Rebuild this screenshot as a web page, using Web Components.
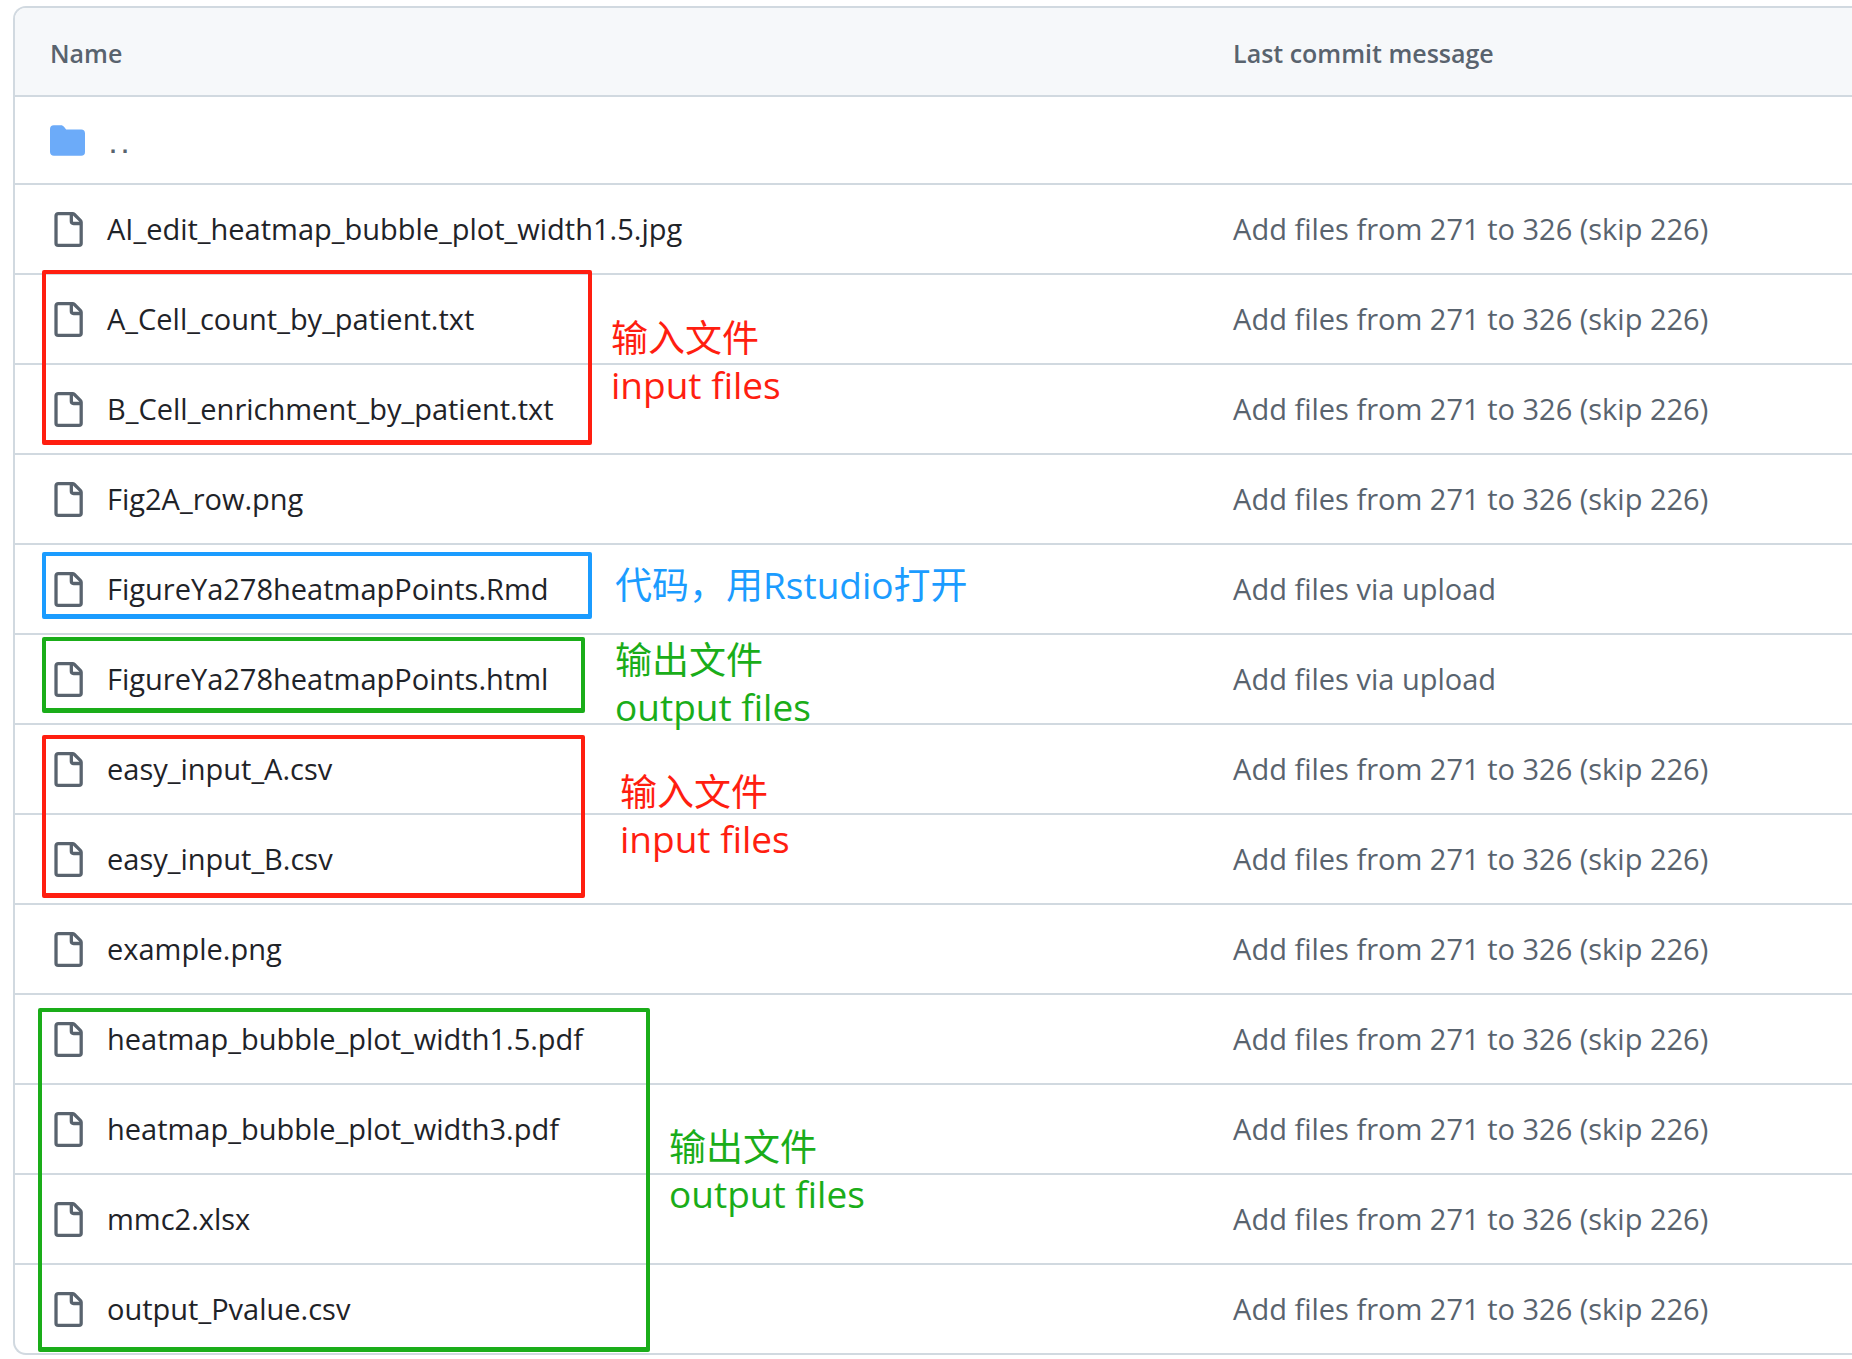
<!DOCTYPE html>
<html lang="zh-CN">
<head>
<meta charset="utf-8">
<meta name="viewport" content="width=device-width, initial-scale=1">
<title>FigureYa278heatmapPoints</title>
<style>
  body {
    margin: 0;
    background: #fff;
    color: #1f2328;
    font-family: "Open Sans", "Noto Sans CJK SC", sans-serif;
  }
</style>
</head>
<body>
<annotated-page>
  <file-table></file-table>

  <mark-box slot="marks" tone="red" style="left:42px;top:270px;width:550px;height:175px"></mark-box>
  <mark-box slot="marks" tone="blue" style="left:42px;top:552px;width:550px;height:67px"></mark-box>
  <mark-box slot="marks" tone="green" style="left:42px;top:637px;width:543px;height:76px"></mark-box>
  <mark-box slot="marks" tone="red" style="left:42px;top:735px;width:543px;height:163px"></mark-box>
  <mark-box slot="marks" tone="green" style="left:38px;top:1008px;width:612px;height:344px"></mark-box>

  <mark-note slot="marks" tone="red" style="left:611px;top:314px">输入文件<span slot="en">input files</span></mark-note>
  <mark-note slot="marks" tone="blue" style="left:615px;top:561px">代码，用Rstudio打开</mark-note>
  <mark-note slot="marks" tone="green" style="left:615px;top:636px">输出文件<span slot="en">output files</span></mark-note>
  <mark-note slot="marks" tone="red" style="left:620px;top:768px">输入文件<span slot="en">input files</span></mark-note>
  <mark-note slot="marks" tone="green" style="left:669px;top:1123px">输出文件<span slot="en">output files</span></mark-note>
</annotated-page>

<script>
const attach = (host, html) => {
  host.attachShadow({ mode: "open" }).innerHTML = html;
};

const TONES = `
  :host([tone="red"])   { --tone: #ff1e10; }
  :host([tone="blue"])  { --tone: #1b9cff; }
  :host([tone="green"]) { --tone: #1aad19; }
`;

class AnnotatedPage extends HTMLElement {
  constructor() {
    super();
    attach(this, `
      <style>
        :host { display: block; position: relative; overflow: hidden; }
        main { padding: 6px 0 4px 13px; }
      </style>
      <main><slot></slot></main>
      <slot name="marks"></slot>`);
  }
}

class MarkBox extends HTMLElement {
  constructor() {
    super();
    attach(this, `
      <style>
        ${TONES}
        :host {
          position: absolute;
          box-sizing: border-box;
          border: solid var(--tone);
          border-width: 4px 4px 5px 4px;
          border-radius: 2px;
          pointer-events: none;
        }
      </style>`);
  }
}

class MarkNote extends HTMLElement {
  constructor() {
    super();
    attach(this, `
      <style>
        ${TONES}
        :host {
          position: absolute;
          display: flex;
          flex-direction: column;
          color: var(--tone);
          font-size: 37px;
          line-height: 47px;
          white-space: nowrap;
        }
      </style>
      <div><slot></slot></div>
      <slot name="en"></slot>`);
  }
}

const ICONS = {
  folder: "M1.75 1A1.75 1.75 0 0 0 0 2.75v10.5C0 14.216.784 15 1.75 15h12.5A1.75 1.75 0 0 0 16 13.25v-8.5A1.75 1.75 0 0 0 14.25 3H7.5a.25.25 0 0 1-.2-.1l-.9-1.2C6.07 1.26 5.55 1 5 1H1.75Z",
  file: "M2 1.75C2 .784 2.784 0 3.75 0h6.586c.464 0 .909.184 1.237.513l2.914 2.914c.329.328.513.773.513 1.237v9.586A1.75 1.75 0 0 1 13.25 16h-9.5A1.75 1.75 0 0 1 2 14.25Zm1.75-.25a.25.25 0 0 0-.25.25v12.5c0 .138.112.25.25.25h9.5a.25.25 0 0 0 .25-.25V6h-2.75A1.75 1.75 0 0 1 9 4.25V1.5Zm6.75.062V4.25c0 .138.112.25.25.25h2.688l-.011-.013-2.914-2.914-.013-.011Z"
};

class EntryIcon extends HTMLElement {
  constructor() {
    super();
    attach(this, `
      <style>
        :host { display: block; flex: none; width: 35px; height: 35px; color: #59636e; }
        :host([kind="folder"]) { color: #6cabf9; }
        svg { display: block; width: 100%; height: 100%; fill: currentColor; }
      </style>
      <svg viewBox="0 0 16 16" aria-hidden="true"><path/></svg>`);
  }
  connectedCallback() {
    this.shadowRoot.querySelector("path").setAttribute("d", ICONS[this.getAttribute("kind")]);
  }
}

const BULK = "Add files from 271 to 326 (skip 226)";
const UPLOAD = "Add files via upload";
const FILES = [
  ["AI_edit_heatmap_bubble_plot_width1.5.jpg", BULK],
  ["A_Cell_count_by_patient.txt", BULK],
  ["B_Cell_enrichment_by_patient.txt", BULK],
  ["Fig2A_row.png", BULK],
  ["FigureYa278heatmapPoints.Rmd", UPLOAD],
  ["FigureYa278heatmapPoints.html", UPLOAD],
  ["easy_input_A.csv", BULK],
  ["easy_input_B.csv", BULK],
  ["example.png", BULK],
  ["heatmap_bubble_plot_width1.5.pdf", BULK],
  ["heatmap_bubble_plot_width3.pdf", BULK],
  ["mmc2.xlsx", BULK],
  ["output_Pvalue.csv", BULK]
];

class FileTable extends HTMLElement {
  constructor() {
    super();
    attach(this, `
      <style>
        :host {
          display: block;
          border: 2px solid #d1d9e0;
          border-right: 0;
          border-radius: 13px 0 0 13px;
          overflow: hidden;
        }
        table {
          width: 100%;
          table-layout: fixed;
          border-collapse: separate;
          border-spacing: 0;
          font-size: 29px;
          line-height: 40px;
        }
        th, td {
          box-sizing: border-box;
          height: 90px;
          padding: 0 0 0 24px;
          border-bottom: 2px solid #d1d9e0;
          text-align: left;
          white-space: nowrap;
        }
        th { height: 89px; padding-top: 2px; background: #f6f8fa; color: #59636e; font-size: 25px; font-weight: 600; }
        th:first-child, td:first-child { width: 65%; padding-left: 35px; }
        .up td { height: 88px; }
        tr:last-child td { border-bottom: 0; height: 88px; }
        .entry { display: flex; align-items: center; gap: 22px; }
        a { color: inherit; text-decoration: none; }
        .up a { color: #59636e; font: bold 20px/40px "DejaVu Sans Mono", monospace; padding-top: 12px; }
        .message { color: #59636e; }
      </style>
      <table>
        <thead><tr><th scope="col">Name</th><th scope="col">Last commit message</th></tr></thead>
        <tbody>
          <tr class="up"><td colspan="2"><div class="entry"><entry-icon kind="folder"></entry-icon><a href="#up">..</a></div></td></tr>
          ${FILES.map(([name, message]) => `
          <tr>
            <td><div class="entry"><entry-icon kind="file"></entry-icon><a href="#${name}">${name}</a></div></td>
            <td><a class="message" href="#commit">${message}</a></td>
          </tr>`).join("")}
        </tbody>
      </table>`);
  }
}

customElements.define("annotated-page", AnnotatedPage);
customElements.define("mark-box", MarkBox);
customElements.define("mark-note", MarkNote);
customElements.define("entry-icon", EntryIcon);
customElements.define("file-table", FileTable);
</script>
</body>
</html>
